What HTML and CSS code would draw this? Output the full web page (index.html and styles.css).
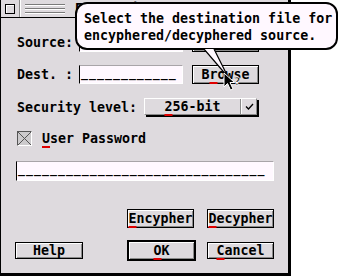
FILE: index.html
```html
<!DOCTYPE html>
<html lang="en">
<head>
    <meta charset="UTF-8">
    <meta name="viewport" content="width=device-width, initial-scale=1.0">
    <title>Encryption</title>
    <link rel="stylesheet" href="styles.css">
</head>
<body>

<div class="window">
    <div class="titlebar">
        <span class="close-box"></span>
        <span class="divider"></span>
        <span class="grip"></span>
        <span class="title">Encryption</span>
        <span class="grip wide"></span>
    </div>

    <div class="content">
        <div class="row file-row">
            <span class="label">Source:</span>
            <span class="field short">____________</span>
            <span class="button">Browse</span>
        </div>

        <div class="row file-row">
            <span class="label">Dest. :</span>
            <span class="field short">____________</span>
            <span class="button">B<span class="key">r</span>owse</span>
        </div>

        <div class="row level-row">
            <span class="label wide">Security level:</span>
            <span class="select">
                <span class="select-value"><span class="key">2</span>56-bit</span>
                <span class="select-mark">
                    <svg width="9" height="7" viewBox="0 0 9 7"><polyline points="1,3.5 3.5,6 8,1" fill="none" stroke="#000" stroke-width="1.3"/></svg>
                </span>
            </span>
        </div>

        <div class="row check-row">
            <span class="checkbox">
                <svg width="13" height="13" viewBox="0 0 13 13"><path d="M0 0 L13 13 M13 0 L0 13" stroke="#555" stroke-width="1"/></svg>
            </span>
            <span class="check-label"><span class="key">U</span>ser Password</span>
        </div>

        <div class="field long">_______________________________</div>

        <div class="row actions">
            <span class="button"><span class="key">E</span>ncypher</span>
            <span class="button"><span class="key">D</span>ecypher</span>
        </div>

        <div class="row actions bottom">
            <span class="button small help">Help</span>
            <span class="button default"><span class="key">O</span>K</span>
            <span class="button small"><span class="key">C</span>ancel</span>
        </div>
    </div>

    <!-- balloon help over the dialog -->
    <div class="bubble">
        Select the destination file for<br>
        encyphered/decyphered source.
    </div>
    <svg class="tail" width="32" height="32" viewBox="0 0 32 32">
        <polygon points="2,0 12,0 26,28" fill="#fff8ff"/>
        <path d="M2 0 L26 28 M12 0 L26 28" stroke="#000" stroke-width="1.2" fill="none"/>
    </svg>
    <svg class="pointer" width="20" height="22" viewBox="0 0 20 22">
        <path d="M1 1 L1 15 L4.5 11.5 L7.5 18 L10 17 L7 10.5 L11.5 10.5 Z" fill="#000" stroke="#fff" stroke-width="1"/>
        <text x="11" y="13" font-family="DejaVu Sans" font-weight="bold" font-size="11" fill="#000" stroke="#fff" stroke-width="0.6">?</text>
    </svg>
</div>

</body>
</html>
```

FILE: styles.css
```css
body {
    margin: 0;
    background-color: #fff;
    font-family: "DejaVu Sans Mono", "Liberation Mono", monospace;
    font-weight: bold;
    font-size: 13.3px;
    color: #000;
}
.window {
    position: relative;
    width: 291px;
    height: 276px;
    box-sizing: border-box;
    background-color: #dedade;
    border-left: 1px solid #000;
    border-right: 3px solid #000;
    border-bottom: 3px solid #000;
}
.titlebar {
    display: flex;
    align-items: flex-start;
    height: 17px;
    padding-left: 4px;
    overflow: hidden;
    border-bottom: 1px solid #000;
}
.close-box {
    flex-shrink: 0;
    width: 10px;
    height: 10px;
    margin-top: 4px;
    box-sizing: border-box;
    border: 1px solid #000;
    box-shadow: inset 1px 1px 0 #fff;
}
.divider {
    width: 0;
    height: 17px;
    margin-left: 4px;
    border-left: 1px solid #8a8a8a;
    border-right: 1px solid #fff;
}
.grip {
    flex-shrink: 0;
    width: 40px;
    height: 10px;
    margin-top: 4px;
    margin-left: 4px;
    background: repeating-linear-gradient(to bottom, #7a7a7a 0 1px, #fff 1px 2px, transparent 2px 4px);
}
.grip.wide {
    width: 120px;
    margin-left: 10px;
}
.title {
    margin-left: 10px;
    line-height: 17px;
}
.content {
    display: flex;
    flex-direction: column;
    width: 259px;
    margin-left: 14px;
}
.row {
    display: flex;
    align-items: center;
}
.file-row {
    height: 19px;
    margin-top: 13px;
}
.file-row:first-child {
    margin-top: 15px;
}
.label {
    width: 62px;
    padding-left: 2px;
    white-space: nowrap;
}
.label.wide {
    width: 127px;
}
.field {
    box-sizing: border-box;
    height: 19px;
    padding-left: 1px;
    overflow: hidden;
    white-space: nowrap;
    font-size: 11.6px;
    letter-spacing: 1px;
    line-height: 15px;
    background-color: #fff8ff;
    border: 1px solid #a8a4a8;
    border-left-color: #000;
    border-bottom-color: #fff;
    border-right-color: #fff;
}
.field.short {
    width: 104px;
    margin-right: 9px;
}
.field.long {
    width: 258px;
    height: 20px;
    margin-left: 1px;
    margin-top: 15px;
}
.button {
    display: flex;
    align-items: center;
    justify-content: center;
    box-sizing: border-box;
    width: 67px;
    height: 19px;
    background-color: #dedade;
    border: 1px solid #000;
    box-shadow: inset 1px 1px 0 #fff, inset -1px -1px 0 #8a8a8a;
    white-space: nowrap;
}
.button.small {
    height: 17px;
}
.button.help {
    width: 68px;
    margin-right: auto;
}
.button.default {
    width: 69px;
    height: 21px;
    border-width: 2px;
    margin-right: 11px;
}
.level-row {
    height: 19px;
    margin-top: 14px;
}
.select {
    display: flex;
    box-sizing: border-box;
    width: 113px;
    height: 17px;
    margin-top: -2px;
    border: 1px solid #fff;
    border-right-color: #8a8a8a;
    border-bottom-color: #8a8a8a;
    box-shadow: 2px 2px 0 #000;
}
.select-value {
    display: flex;
    align-items: center;
    justify-content: center;
    width: 95px;
    border-right: 1px solid #8a8a8a;
}
.select-mark {
    display: flex;
    align-items: center;
    justify-content: center;
    flex: 1;
    border-left: 1px solid #fff;
}
.check-row {
    height: 15px;
    margin-top: 14px;
}
.checkbox {
    display: flex;
    box-sizing: border-box;
    width: 15px;
    height: 15px;
    margin-left: 2px;
    background-color: #cccacc;
    border: 1px solid #555;
    border-right-color: #fff;
    border-bottom-color: #fff;
}
.check-label {
    margin-left: 10px;
}
.actions {
    justify-content: flex-end;
    gap: 13px;
    height: 19px;
    margin-top: 28px;
}
.actions.bottom {
    gap: 0;
    height: 21px;
    margin-top: 12px;
}
.key {
    text-decoration: underline 2px #e00000;
    text-underline-offset: 3px;
}
.bubble {
    position: absolute;
    left: 74px;
    top: 2px;
    width: 263px;
    height: 48px;
    box-sizing: border-box;
    padding: 6px 0 0 7px;
    line-height: 17px;
    white-space: nowrap;
    background-color: #fff8ff;
    border: 2px solid #000;
    border-radius: 12px;
}
.tail {
    position: absolute;
    left: 201px;
    top: 49px;
}
.pointer {
    position: absolute;
    left: 222px;
    top: 72px;
}
```
